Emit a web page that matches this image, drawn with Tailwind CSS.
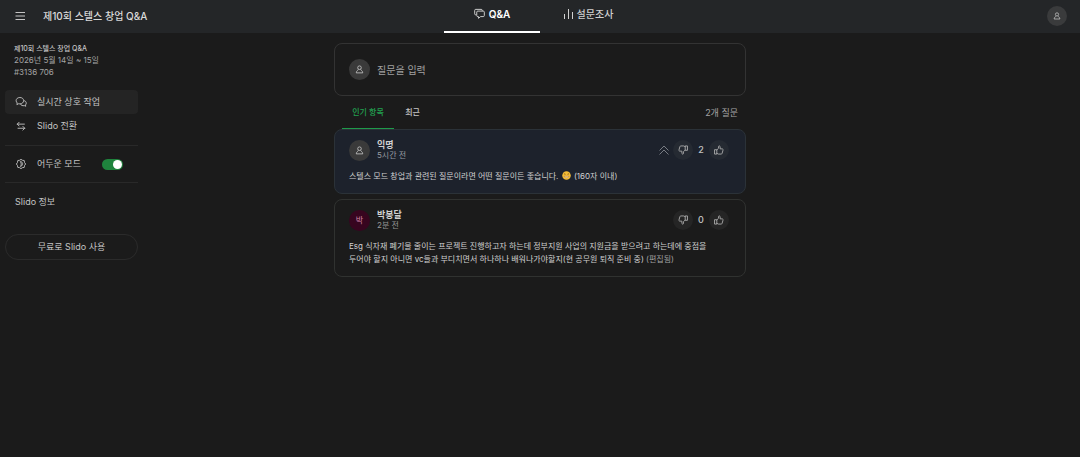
<!DOCTYPE html>
<html lang="ko">
<head>
<meta charset="utf-8">
<meta name="viewport" content="width=device-width, initial-scale=1">
<title>제10회 스텔스 창업 Q&amp;A</title>
<script src="https://cdn.jsdelivr.net/npm/@tailwindcss/browser@4"></script>
</head>
<body class="min-h-screen bg-[#1b1b1b] font-['Inter','Noto_Sans_CJK_KR',sans-serif] text-[9px] leading-3 text-[#c4c4c4]">
<svg class="hidden" aria-hidden="true">
  <symbol id="person" viewBox="0 0 16 16" fill="none" stroke="currentColor" stroke-width="1.5" stroke-linejoin="round"><circle cx="8" cy="4.800" r="3.2"/><path d="M5.800 7.800C6.500 9.500 2.500 9.500 2.200 14h11.600C13.500 9.500 9.500 9.500 10.200 7.800"/></symbol>
  <symbol id="up" viewBox="0 0 16 16" fill="none" stroke="currentColor" stroke-width="1.400" stroke-linejoin="round" stroke-linecap="round"><path d="M1.500 7.500H4.500V14.500H1.500zM4.500 8 7.300 5.200V2.500C7.300 1 9.800 1 9.800 3V6.200H13C14.300 6.200 14.700 7.200 14.400 8.200L13 13.300C12.800 14.100 12.300 14.500 11.500 14.500H7L4.500 13.300"/></symbol>
</svg>

<header class="grid h-[33px] grid-cols-[1fr_auto_1fr] items-center bg-[#242628]">
  <div class="flex items-center gap-[17px] pb-0.5 pl-[14px]">
    <button type="button" aria-label="메뉴" class="text-[#c4c4c4]">
      <svg class="size-3" viewBox="0 0 12 12" stroke="currentColor" stroke-width="1"><path d="M1.500 2.500h9.500M1.500 6h9.500M1.500 9.500h9.500"/></svg>
    </button>
    <h1 class="text-[10px] font-medium text-[#dadada]">제10회 스텔스 창업 Q&amp;A</h1>
  </div>
  <nav class="flex h-full text-[10px] font-medium">
    <a href="#qna" class="flex w-24 items-center justify-center gap-1 border-b-2 border-white pb-1 font-semibold text-white">
      <svg class="size-[11px] text-[#d0d0d0]" viewBox="0 0 16 16" fill="none" stroke="currentColor" stroke-width="1.400" stroke-linejoin="round"><path d="M3.500 10H2.500C1.500 10 1 9.500 1 8.500V3.500C1 2.500 1.500 2 2.500 2h8C11.500 2 12 2.500 12 3.500V4.500"/><path d="M5.500 4.500h8C14.500 4.500 15 5 15 6v5c0 1-.5 1.500-1.500 1.500H9.500L6.500 15V12.500h-1C4.500 12.500 4 12 4 11V6c0-1 .5-1.500 1.500-1.500z"/></svg>
      Q&amp;A
    </a>
    <a href="#polls" class="flex w-24 items-center justify-center gap-1 border-b-2 border-transparent pb-1 text-[#d0d0d0]">
      <svg class="size-2.5" viewBox="0 0 10 10" stroke="currentColor" stroke-width="1"><path d="M1.500 5v5M5.500 0v10M9.500 3v7"/></svg>
      설문조사
    </a>
  </nav>
  <div class="flex justify-end pr-[13px] pb-0.5">
    <button type="button" aria-label="프로필" class="flex size-5 items-center justify-center rounded-full bg-[#3a3b3c] text-[#c4c4c4]"><svg class="size-2"><use href="#person"/></svg></button>
  </div>
</header>

<div class="grid grid-cols-[1fr_412px_1fr]">
  <aside class="w-[138px] pt-[10px] pl-[5px]">
    <div class="pl-[9px] text-[8px] text-[#a4a4a4]">
      <p class="text-[7px] font-medium text-[#c4c4c4]">제10회 스텔스 창업 Q&amp;A</p>
      <p class="leading-[11px]">2026년 5월 14일 ~ 15일</p>
      <p>#3136 706</p>
    </div>
    <nav class="mt-3 border-b border-[#292929] pb-[7px]">
      <a href="#live" class="flex h-6 items-center gap-2.5 rounded bg-[#242424] pl-2.5">
        <svg class="size-3" viewBox="0 0 16 16" fill="none" stroke="currentColor" stroke-width="1.200" stroke-linejoin="round"><path d="M6.500 2C3.500 2 1.500 3.800 1.500 6.200c0 1.300.6 2.300 1.500 3.100L2.500 11.500l2.300-1.200c.5.200 1.200.2 1.700.2 3 0 5-1.900 5-4.300S9.500 2 6.500 2z"/><path d="M11.800 6.200c1.900.2 3.200 1.600 3.200 3.300 0 1-.4 1.800-1.100 2.400l.4 1.800-1.900-.9c-2.300.5-4.400-.3-5.200-2.300"/></svg>
        실시간 상호 작업
      </a>
      <a href="#switch" class="flex h-6 items-center gap-2.5 rounded pl-2.5">
        <svg class="size-3" viewBox="0 0 16 16" fill="none" stroke="currentColor" stroke-width="1.200" stroke-linejoin="round" stroke-linecap="round"><path d="M5.500 3 3 5.500 5.500 8M3 5.500h9.500M10.500 8.500 13 11l-2.500 2.500M13 11H4"/></svg>
        Slido 전환
      </a>
    </nav>
    <label class="flex h-[37px] items-center gap-2.5 border-b border-[#292929] pr-[15px] pl-2.5">
      <svg class="size-3" viewBox="0 0 16 16" fill="none" stroke="currentColor" stroke-width="1.200" stroke-linejoin="round"><path d="M8 1.800 9.800 3l2.500.4.400 2.600L14.200 8l-1.500 2-.4 2.500-2.500.4L8 14.200l-1.800-1.300-2.500-.4L3.300 10 1.800 8l1.500-2 .4-2.600L6.200 3z"/><path d="M7 4.800c3.800-.3 4.600 5.600.2 6.500C8.800 9 8.800 7 7 4.800z"/></svg>
      어두운 모드
      <input type="checkbox" role="switch" checked class="ml-auto h-[11px] w-[21px] appearance-none rounded-full bg-[#1f833d] p-px before:block before:size-[9px] before:rounded-full before:bg-white checked:before:ml-auto">
    </label>
    <a href="#about" class="mt-[13px] ml-2.5 block">Slido 정보</a>
    <button type="button" class="mt-[26px] h-[26px] w-full rounded-full border border-[#2b2b2b]">무료로 Slido 사용</button>
  </aside>

  <main class="pt-[10px]">
    <label class="flex h-[53px] items-center gap-[7px] rounded-lg border border-[#333] px-[14px]">
      <span class="flex size-[21px] shrink-0 items-center justify-center rounded-full bg-[#3a3a3a]"><svg class="size-[9px]"><use href="#person"/></svg></span>
      <input type="text" aria-label="질문을 입력" placeholder="질문을 입력" class="min-w-0 flex-1 bg-transparent text-[10px] outline-none placeholder:text-[#a0a0a0]">
    </label>
    <div class="flex h-[33px] items-stretch px-2 text-[8px]">
      <button type="button" class="w-[52px] border-b border-[#1f9a4a] font-medium text-[#22a050]">인기 항목</button>
      <button type="button" class="w-[37px] border-b border-transparent font-medium">최근</button>
      <span class="ml-auto self-center text-[9px] text-[#a4a4a4]">2개 질문</span>
    </div>
    <article class="rounded-lg border border-[#2b3238] bg-[#1d222c] pt-[9px] pr-4 pb-[10px] pl-[14px]">
      <div class="flex items-center gap-[7px]">
        <span class="flex size-[21px] items-center justify-center rounded-full bg-[#3a3a3a]"><svg class="size-[9px]"><use href="#person"/></svg></span>
        <div class="leading-[11px]">
          <p class="font-semibold text-[#d0d0d0]">익명</p>
          <p class="text-[8px] text-[#979ba1]">5시간 전</p>
        </div>
        <div class="ml-auto flex items-center gap-1">
          <svg class="size-2.5 text-[#777b82]" viewBox="0 0 10 10" fill="none" stroke="currentColor" stroke-width="1"><path d="M.5 5.500 5 1l4.500 4.500M.5 9.500 5 5l4.500 4.500"/></svg>
          <button type="button" aria-label="싫어요" class="flex size-5 items-center justify-center rounded-full bg-[#252a32] text-[#b0b0b0]"><svg class="size-2.5 rotate-180"><use href="#up"/></svg></button>
          <span class="w-2 text-center text-[9px] font-medium">2</span>
          <button type="button" aria-label="좋아요" class="flex size-5 items-center justify-center rounded-full bg-[#252a32] text-[#b0b0b0]"><svg class="size-2.5"><use href="#up"/></svg></button>
        </div>
      </div>
      <p class="mt-[9px] text-[8px] leading-[13px] text-[#d0d0d0]">스텔스 모드 창업과 관련된 질문이라면 어떤 질문이든 좋습니다.
        <svg role="img" aria-label="웃는 얼굴" class="mx-px inline size-[9px] align-[-1px]" viewBox="0 0 18 18"><circle cx="9" cy="9" r="8.500" fill="#f5bd35"/><path d="M4 6.500q1.500-1.500 3 0M11 6.500q1.500-1.500 3 0" fill="none" stroke="#65401b" stroke-width="1.500"/><path d="M4 10.500h10c-1 4-9 4-10 0z" fill="#fbe9c0" stroke="#a86f2a"/></svg>
        (160자 이내)</p>
    </article>
    <article class="mt-[5px] rounded-lg border border-[#303230] pt-[9px] pr-4 pb-[10px] pl-[14px]">
      <div class="flex items-center gap-[7px]">
        <span class="flex size-[21px] items-center justify-center rounded-full bg-[#37051f] text-[8px] text-[#d384a8]">박</span>
        <div class="leading-[11px]">
          <p class="font-semibold text-[#d0d0d0]">박봉달</p>
          <p class="text-[8px] text-[#979797]">2분 전</p>
        </div>
        <div class="ml-auto flex items-center gap-1">
          <button type="button" aria-label="싫어요" class="flex size-5 items-center justify-center rounded-full bg-[#252525] text-[#b0b0b0]"><svg class="size-2.5 rotate-180"><use href="#up"/></svg></button>
          <span class="w-2 text-center text-[9px] font-medium">0</span>
          <button type="button" aria-label="좋아요" class="flex size-5 items-center justify-center rounded-full bg-[#252525] text-[#b0b0b0]"><svg class="size-2.5"><use href="#up"/></svg></button>
        </div>
      </div>
      <p class="mt-[9px] text-[8px] leading-[13px] text-[#d0d0d0]">Esg 식자재 폐기물 줄이는 프로젝트 진행하고자 하는데 정부지원 사업의 지원금을 받으려고 하는데에 중점을<br>두어야 할지 아니면 vc들과 부디치면서 하나하나 배워나가야할지(현 공무원 퇴직 준비 중) <span class="text-[#a0a0a0]">(편집됨)</span></p>
    </article>
  </main>
</div>
</body>
</html>
